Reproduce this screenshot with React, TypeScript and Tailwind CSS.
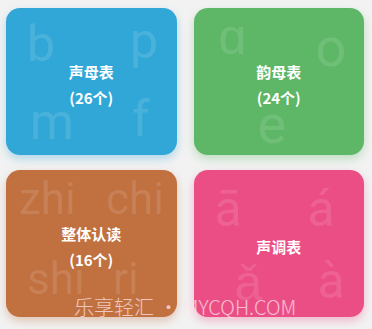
import React from 'react';

interface Glyph {
  text: string;
  x: number;
  y: number;
  size?: number;
}

interface CardProps {
  title: string;
  count?: string;
  color: string;
  shadow: string;
  glyphs: Glyph[];
}

const Card = ({ title, count, color, shadow, glyphs }: CardProps) => (
  <div className={`relative h-[147px] overflow-hidden rounded-[14px] ${color} ${shadow}`}>
    {/* faint pinyin letters in the background */}
    {glyphs.map((g) => (
      <span
        key={g.text + g.x}
        className="absolute leading-none text-white/[0.12] font-['Roboto',sans-serif]"
        style={{ left: g.x, top: g.y, fontSize: g.size ?? 50 }}
      >
        {g.text}
      </span>
    ))}
    <div className="relative flex h-full flex-col items-center justify-center pt-[6px] font-['Noto_Sans_CJK_SC',sans-serif] text-[15px] font-bold text-white leading-[26px]">
      <div>{title}</div>
      {count && <div>{count}</div>}
    </div>
  </div>
);

export default function App() {
  return (
    <div className="relative h-[329px] w-[372px] bg-[#f2f2f2]">
      <div className="grid grid-cols-2 gap-x-[17px] gap-y-[15px] pl-[6px] pr-[8px] pt-[8px]">
        <Card
          title="声母表"
          count="(26个)"
          color="bg-[#31a7d7]"
          shadow="shadow-[0_4px_8px_rgba(49,167,215,0.35)]"
          glyphs={[
            { text: 'b', x: 21, y: 11 },
            { text: 'p', x: 124, y: 8 },
            { text: 'm', x: 24, y: 89 },
            { text: 'f', x: 126, y: 86 },
          ]}
        />
        <Card
          title="韵母表"
          count="(24个)"
          color="bg-[#5db767]"
          shadow="shadow-[0_4px_8px_rgba(93,183,103,0.35)]"
          glyphs={[
            { text: 'ɑ', x: 25, y: 4 },
            { text: 'o', x: 122, y: 13, size: 54 },
            { text: 'e', x: 64, y: 90, size: 54 },
          ]}
        />
        <Card
          title="整体认读"
          count="(16个)"
          color="bg-[#c1703f]"
          shadow="shadow-[0_4px_8px_rgba(193,112,63,0.35)]"
          glyphs={[
            { text: 'zhi', x: 13, y: 7, size: 44 },
            { text: 'chi', x: 100, y: 7, size: 44 },
            { text: 'shi', x: 21, y: 87, size: 44 },
            { text: 'ri', x: 107, y: 87, size: 44 },
          ]}
        />
        <Card
          title="声调表"
          color="bg-[#eb4d85]"
          shadow="shadow-[0_4px_8px_rgba(235,77,133,0.35)]"
          glyphs={[
            { text: 'ā', x: 21, y: 14 },
            { text: 'á', x: 114, y: 14 },
            { text: 'ǎ', x: 41, y: 88 },
            { text: 'à', x: 124, y: 86 },
          ]}
        />
      </div>
      {/* watermark */}
      <div className="absolute left-[74px] top-[293px] whitespace-nowrap font-['Noto_Sans_CJK_SC',sans-serif] text-[20px] font-light leading-[28px] text-[#ffe4ea]/75">
        乐享轻汇 • MYCQH.COM
      </div>
    </div>
  );
}
